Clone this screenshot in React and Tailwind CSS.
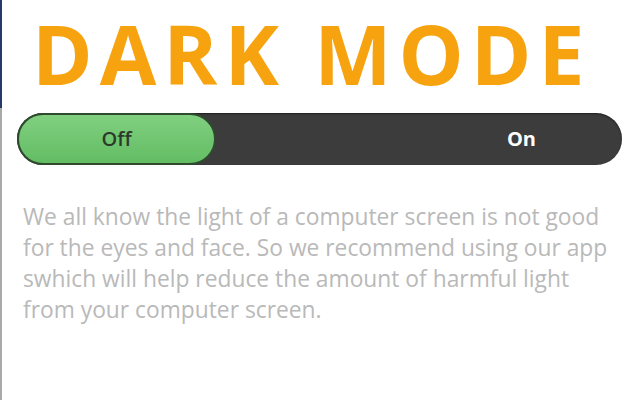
import React, { useState } from 'react';

export default function App() {
    const [dark, setDark] = useState(false);

    return (
        <div className="flex h-[400px] w-[640px] bg-white overflow-hidden" style={{ fontFamily: '"Open Sans", "Liberation Sans", sans-serif' }}>
            {/* window edge */}
            <div className="flex flex-col w-[2px] shrink-0">
                <div className="h-[108px] bg-[#27386b]" />
                <div className="flex-1 bg-[#a9a9a9]" />
            </div>

            <div className="flex-1 flex flex-col pl-[15px]">
                {/* Title */}
                <h1 className="-mt-[3px] ml-[15px] text-[82px] leading-[112px] font-bold tracking-[7px] text-[#f7a30f] whitespace-nowrap">
                    DARK MODE
                </h1>

                {/* Toggle */}
                <div
                    onClick={() => setDark(!dark)}
                    className="mt-[4px] mr-[18px] h-[52px] rounded-full bg-[#3c3c3c] flex items-stretch cursor-pointer shadow-[inset_0_1px_2px_rgba(0,0,0,0.5)]"
                >
                    <div className="w-[199px] rounded-full bg-gradient-to-b from-[#80d080] to-[#63bd63] border-2 border-[#2f4a2f] flex items-center justify-center">
                        <span className="text-[20px] font-semibold text-[#2c3a2c]">Off</span>
                    </div>
                    <div className="flex-1 flex items-center justify-end pr-[86px]">
                        <span className="text-[20px] font-bold text-white">On</span>
                    </div>
                </div>

                {/* Description */}
                <p className="mt-[36px] ml-[6px] text-[22.8px] leading-[31px] text-[#b9b9b9] whitespace-nowrap">
                    We all know the light of a computer screen is not good<br />
                    for the eyes and face. So we recommend using our app<br />
                    swhich will help reduce the amount of harmful light<br />
                    from your computer screen.
                </p>
            </div>
        </div>
    );
}
